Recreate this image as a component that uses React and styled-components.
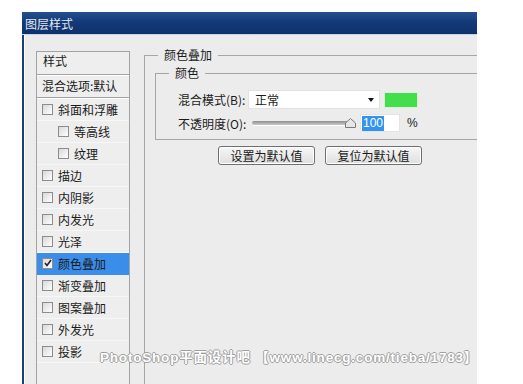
import styled, { createGlobalStyle } from 'styled-components';

const GlobalStyle = createGlobalStyle`
  html, body {
    margin: 0;
    padding: 0;
    background: #ffffff;
  }
  body {
    font-family: "Noto Sans CJK SC", "Liberation Sans", sans-serif;
    font-size: 12px;
    color: #1a1a1a;
  }
`;

const Page = styled.div`
  position: relative;
  width: 523px;
  height: 384px;
  overflow: hidden;
  padding: 12px 0 0 22px;
  box-sizing: border-box;
`;

const Win = styled.div`
  width: 455px;
  height: 372px;
  display: flex;
  flex-direction: column;
  overflow: hidden;
`;

const TitleBar = styled.div`
  height: 22px;
  flex: none;
  display: flex;
  align-items: center;
  padding-left: 3px;
  color: #e4e8ef;
  font-size: 12px;
  background: linear-gradient(to bottom, #24508e 0%, #133a78 45%, #0e316c 100%);
  border-bottom: 1px solid #c9d3e4;
`;

const Body = styled.div`
  flex: 1;
  display: flex;
  align-items: flex-start;
  background: #ececec;
  border-left: 2px solid #1d3f7a;
  box-shadow: inset 1px 0 0 #ffffff;
`;

const StyleList = styled.div`
  flex: none;
  width: 92px;
  height: 400px;
  margin: 16px 0 0 12px;
  border: 1px solid #a3a3a3;
  background: #eeeeee;
`;

const ListHead = styled.div`
  height: 22px;
  line-height: 18px;
  padding-left: 6px;
  border-bottom: 1px solid #a3a3a3;
  box-shadow: 0 1px 0 #ffffff;
`;

const Row = styled.div`
  display: flex;
  align-items: center;
  gap: 5px;
  height: 22px;
  padding-left: ${p => (p.$indent ? 21 : 5)}px;
  padding-bottom: 1px;
  background: ${p => (p.$active ? '#3a8de8' : 'transparent')};
  border-bottom: 1px solid ${p => (p.$active ? '#3a8de8' : '#f7f7f7')};
  box-sizing: border-box;
  white-space: nowrap;
`;

const BlendRow = styled(Row)`
  height: 23px;
  border-bottom: 1px solid #a3a3a3;
  box-shadow: 0 1px 0 #ffffff;
  margin-bottom: 1px;
`;

const Box = styled.span`
  flex: none;
  width: 9px;
  height: 9px;
  border: 1px solid #8c8c8c;
  background: linear-gradient(135deg, #d8d8d8, #ffffff);
  display: flex;
  align-items: center;
  justify-content: center;
`;

const Right = styled.div`
  flex: none;
  width: 420px;
  margin: 13px 0 0 14px;
`;

const Group = styled.fieldset`
  margin: 0;
  padding: ${p => p.$pad};
  border: 1px solid #a6a6a6;
  min-width: 0;
`;

const Legend = styled.legend`
  margin-left: 3px;
  padding: 0 6px;
  line-height: 14px;
  font-size: 12px;
`;

const FieldRow = styled.div`
  display: flex;
  align-items: center;
  height: ${p => p.$h}px;
  margin-top: ${p => p.$mt || 0}px;
  padding-left: 12px;
`;

const Label = styled.span`
  width: 70px;
  flex: none;
  white-space: nowrap;
`;

const Select = styled.div`
  width: 132px;
  height: 19px;
  box-sizing: border-box;
  background: #ffffff;
  border: 1px solid #e2e2e2;
  display: flex;
  align-items: center;
  justify-content: space-between;
  padding: 0 5px 0 6px;
`;

const Arrow = styled.span`
  width: 0;
  height: 0;
  border-left: 3.5px solid transparent;
  border-right: 3.5px solid transparent;
  border-top: 4px solid #111111;
`;

const Swatch = styled.div`
  width: 34px;
  height: 16px;
  margin-left: 4px;
  background: #43de4b;
  border: 1px solid #d8efd8;
  box-sizing: border-box;
`;

const Slider = styled.div`
  position: relative;
  width: 100px;
  height: 12px;
  margin-left: 4px;
  display: flex;
  align-items: center;
`;

const Track = styled.div`
  width: 100%;
  height: 4px;
  border-radius: 2px;
  background: linear-gradient(to bottom, #8f8f8f, #c9c9c9);
  box-shadow: 0 1px 0 #ffffff;
`;

const Thumb = styled.svg`
  position: absolute;
  right: -4px;
  top: 1px;
`;

const NumInput = styled.div`
  width: 40px;
  height: 18px;
  margin-left: 8px;
  box-sizing: border-box;
  background: #ffffff;
  border: 1px solid #e4e4e4;
  display: flex;
  align-items: center;
  padding-left: 1px;
  font-family: "Liberation Sans", Arial, sans-serif;
  font-size: 12px;
`;

const Selected = styled.span`
  background: #3394f0;
  color: #ffffff;
  padding: 0 1px;
  line-height: 15px;
`;

const Percent = styled.span`
  margin-left: 7px;
  font-family: "Liberation Sans", Arial, sans-serif;
  font-size: 12px;
`;

const Buttons = styled.div`
  display: flex;
  gap: 10px;
  margin: 6px 0 0 63px;
`;

const Button = styled.button`
  width: 97px;
  height: 19px;
  padding: 0;
  font-family: "Noto Sans CJK SC", sans-serif;
  font-size: 12px;
  line-height: 17px;
  color: #1a1a1a;
  border: 1px solid #6f6f6f;
  border-radius: 3px;
  background: linear-gradient(to bottom, #f7f7f7, #dedede);
  box-shadow: inset 0 0 0 1px #ffffff;
`;

const Watermark = styled.div`
  position: absolute;
  left: 100px;
  top: 346px;
  font-family: "Liberation Sans", "Noto Sans CJK SC", sans-serif;
  font-weight: bold;
  font-size: 13.5px;
  letter-spacing: 0.8px;
  color: #ffffff;
  white-space: nowrap;
  text-shadow: 1px 0 0 #a0a0a0, -1px 0 0 #a0a0a0, 0 1px 0 #a0a0a0, 0 -1px 0 #a0a0a0;
`;

const Check = () => (
  <svg width="8" height="8" viewBox="0 0 8 8">
    <path d="M1 4 L3 6.5 L7 1" stroke="#222" strokeWidth="1.6" fill="none" />
  </svg>
);

const items = [
  { label: '斜面和浮雕' },
  { label: '等高线', indent: true },
  { label: '纹理', indent: true },
  { label: '描边' },
  { label: '内阴影' },
  { label: '内发光' },
  { label: '光泽' },
  { label: '颜色叠加', checked: true, active: true },
  { label: '渐变叠加' },
  { label: '图案叠加' },
  { label: '外发光' },
  { label: '投影' },
];

export default function App() {
  return (
    <Page>
      <GlobalStyle />
      <Win>
        <TitleBar>图层样式</TitleBar>
        <Body>
          <StyleList>
            <ListHead>样式</ListHead>
            <BlendRow>混合选项:默认</BlendRow>
            {items.map(it => (
              <Row key={it.label} $indent={it.indent} $active={it.active}>
                <Box>{it.checked && <Check />}</Box>
                {it.label}
              </Row>
            ))}
          </StyleList>
          <Right>
            <Group $pad="4px 0 0 10px">
              <Legend>颜色叠加</Legend>
              <Group $pad="10px 0 7px 10px">
                <Legend>颜色</Legend>
                <FieldRow $h={19}>
                  <Label>混合模式(B):</Label>
                  <Select>
                    正常
                    <Arrow />
                  </Select>
                  <Swatch />
                </FieldRow>
                <FieldRow $h={18} $mt={5}>
                  <Label>不透明度(O):</Label>
                  <Slider>
                    <Track />
                    <Thumb width="11" height="10" viewBox="0 0 11 10">
                      <path d="M0.5 9.5 L0.5 5 L5.5 0.5 L10.5 5 L10.5 9.5 Z" fill="#e6e6e6" stroke="#7a7a7a" />
                    </Thumb>
                  </Slider>
                  <NumInput>
                    <Selected>100</Selected>
                  </NumInput>
                  <Percent>%</Percent>
                </FieldRow>
              </Group>
              <Buttons>
                <Button>设置为默认值</Button>
                <Button>复位为默认值</Button>
              </Buttons>
              <div style={{ height: 400 }} />
            </Group>
          </Right>
        </Body>
      </Win>
      <Watermark>PhotoShop平面设计吧 【www.linecg.com/tieba/1783】</Watermark>
    </Page>
  );
}
